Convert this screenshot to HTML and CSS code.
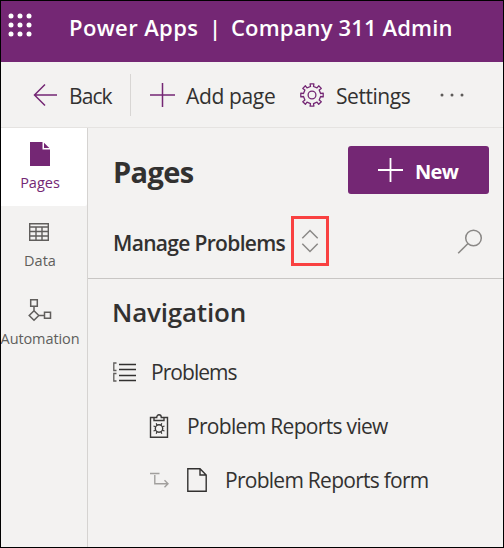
FILE: index.html
```html
<!DOCTYPE html>
<html lang="en">
<head>
<meta charset="utf-8">
<title>Power Apps | Company 311 Admin</title>
<link rel="stylesheet" href="styles.css">
</head>
<body>
<div class="app">
  <header class="topbar">
    <svg class="waffle" width="24" height="24" viewBox="0 0 24 24"><g fill="#fff"><circle cx="3" cy="3" r="2.5"/><circle cx="12" cy="3" r="2.5"/><circle cx="21" cy="3" r="2.5"/><circle cx="3" cy="12" r="2.5"/><circle cx="12" cy="12" r="2.5"/><circle cx="21" cy="12" r="2.5"/><circle cx="3" cy="21" r="2.5"/><circle cx="12" cy="21" r="2.5"/><circle cx="21" cy="21" r="2.5"/></g></svg>
    <span class="brand">Power Apps</span>
    <span class="bar">|</span>
    <span class="appname">Company 311 Admin</span>
  </header>
  <nav class="toolbar">
    <svg class="i-back" width="25" height="24" viewBox="0 0 25 24"><path d="M24 12H1.5M12 1.5 1.5 12 12 22.5" fill="none" stroke="#742774" stroke-width="1.5"/></svg>
    <span class="t-back">Back</span>
    <i class="sep"></i>
    <svg class="i-add" width="25" height="24" viewBox="0 0 25 24"><path d="M0 12H25M12.5 0V24" fill="none" stroke="#742774" stroke-width="1.5"/></svg>
    <span class="t-add">Add page</span>
    <svg class="i-gear" width="24" height="24" viewBox="0 0 24 24"><g fill="none" stroke="#742774" stroke-width="1.3" stroke-linejoin="round"><path d="M10.500 3.500 10.100.8H13.900L13.500 3.500 17 4.900 18.700 2.800 21.300 5.400 19.200 7 20.600 10.500 23.200 10.100V13.900L20.600 13.500 19.200 17 21.300 18.700 18.700 21.300 17 19.200 13.500 20.600 13.900 23.200H10.100L10.500 20.600 7 19.200 5.400 21.300 2.800 18.700 4.900 17 3.500 13.500.8 13.900V10.100L3.500 10.500 4.900 7 2.800 5.400 5.400 2.800 7 4.900Z"/><circle cx="12" cy="12" r="3.900"/></g></svg>
    <span class="t-set">Settings</span>
    <svg class="i-more" width="24" height="4" viewBox="0 0 24 4"><g fill="#5d5b59"><circle cx="2" cy="2" r="1.500"/><circle cx="12" cy="2" r="1.500"/><circle cx="22" cy="2" r="1.500"/></g></svg>
  </nav>
  <div class="body">
    <aside class="rail">
      <div class="tab active">
        <svg width="20" height="24" viewBox="0 0 20 24"><path d="M0 0H12.500V7.500H20V24H0Z" fill="#742774"/><path d="M14 .8V6H19.300Z" fill="#742774"/></svg>
        <span class="r-pages">Pages</span>
      </div>
      <div class="tab">
        <svg class="up" width="20" height="18" viewBox="0 0 20 18"><path d="M.7.700H19.300V17.300H.7ZM0 4H20M0 8.500H20M0 13H20M7 4V18M13 4V18" fill="none" stroke="#605e5c" stroke-width="1.4"/></svg>
        <span class="r-data">Data</span>
      </div>
      <div class="tab">
        <svg class="flow" width="24" height="24" viewBox="0 0 24 24"><path d="M2.700 1.700H9.300V8.300H2.700ZM6 8.300V12.500M6 12.700 10.800 17.500 6 22.300 1.200 17.500ZM10.800 17.500H16.500M16.500 14.300H22.500V20.300H16.500Z" fill="none" stroke="#605e5c" stroke-width="1.500"/></svg>
        <span class="r-auto">Automation</span>
      </div>
    </aside>
    <main class="pane">
      <div class="head">
        <h1>Pages</h1>
        <button class="new"><svg width="25" height="24" viewBox="0 0 25 24"><path d="M0 12H25M12.500 0V24" stroke="#fff" stroke-width="1.800"/></svg><span>New</span></button>
      </div>
      <div class="area">
        <span class="t-area">Manage Problems</span>
        <span class="switch"><svg width="18" height="24" viewBox="0 0 18 24"><path d="M1.300 9.200 9 1.500 16.700 9.200M1.300 14.800 9 22.500 16.700 14.800" fill="none" stroke="#8a8886" stroke-width="1.500"/></svg></span>
        <svg class="i-search" width="26" height="26" viewBox="0 0 26 26"><circle cx="16.500" cy="9" r="7.800" fill="none" stroke="#8a8886" stroke-width="1.500"/><path d="M11 14.500 1.200 24.300" stroke="#8a8886" stroke-width="1.600"/></svg>
      </div>
      <h2>Navigation</h2>
      <div class="row r1">
        <svg width="23" height="20" viewBox="0 0 23 20"><path d="M6 2.500H23M6 7.500H23M6 13.500H23M6 18.500H23" stroke="#323130" stroke-width="1.300"/><path d="M3.500 1H.8V8.500H3.500M3.500 11.500H.8V19H3.500" fill="none" stroke="#605e5c" stroke-width="1.300"/></svg>
        <span class="t1">Problems</span>
      </div>
      <div class="row r2">
        <svg width="20" height="24" viewBox="0 0 20 24"><g fill="none" stroke="#3b3a39" stroke-width="1.400"><path d="M5 3.500H1.500V23.200H18.500V3.500H15M5 6.500V3.500H7.700C7.700-.2 12.300-.2 12.300 3.500H15V6.500Z"/><circle cx="10" cy="14.500" r="3.700"/><path d="M8 11.200 7.200 9.300M12 11.200 12.800 9.300M8 17.800 7.200 19.700M12 17.800 12.800 19.700M6.700 12.800 4.500 12M13.300 12.800 15.500 12M6.700 16.200 4.500 17M13.300 16.200 15.500 17" stroke-width="1.200"/></g></svg>
        <span class="t2">Problem Reports view</span>
      </div>
      <div class="row r3">
        <svg width="19" height="16" viewBox="0 0 19 16"><path d="M0 1.500H9.500M4.800 3V11.800H18M14.500 8.300 18 11.800 14.500 15.300" fill="none" stroke="#a19f9d" stroke-width="1.400"/></svg>
        <svg class="file" width="20" height="24" viewBox="0 0 20 24"><path d="M.8.800H13L19.200 7V23.200H.8ZM13 .8V7H19.200" fill="none" stroke="#323130" stroke-width="1.400"/></svg>
        <span class="t3">Problem Reports form</span>
      </div>
    </main>
  </div>
</div>
</body>
</html>
```
FILE: styles.css
```css
* { box-sizing: border-box; }
body {
  margin: 0;
  font-family: "Open Sans", "Noto Sans", sans-serif;
  color: #323130;
}
svg { display: block; flex: none; }
span { white-space: nowrap; flex: none; }
.app {
  width: 504px;
  height: 548px;
  border: 1px solid #000;
  background: #f3f2f1;
  display: flex;
  flex-direction: column;
  overflow: hidden;
}
.topbar {
  height: 61px;
  background: #742774;
  color: #fff;
  display: flex;
  padding: 11px 0 0 7px;
  font-size: 22px;
  line-height: 30px;
  font-weight: 600;
}
.waffle { margin-top: 1px; }
.brand { width: 129px; margin-left: 37px; letter-spacing: 0.4px; }
.bar { width: 18px; text-align: center; margin-left: 8px; }
.appname { margin-left: 7px; letter-spacing: 0.15px; }
.toolbar {
  height: 65px;
  display: flex;
  align-items: center;
  font-size: 21px;
  line-height: 30px;
}
.toolbar span { padding-top: 2px; }
.i-back { margin-left: 32px; }
.t-back { width: 44px; margin-left: 11px; letter-spacing: -0.9px; }
.sep { width: 1px; height: 42px; background: #d8d6d4; margin-left: 17px; }
.i-add { margin-left: 19px; }
.t-add { width: 91px; margin-left: 11px; letter-spacing: -0.35px; }
.i-gear { margin-left: 23px; }
.t-set { width: 75px; margin-left: 12px; letter-spacing: -0.45px; }
.i-more { margin-left: 29px; }
.body { flex: 1; display: flex; border-top: 1px solid #e5e3e1; }
.rail {
  width: 87px;
  border-right: 1px solid #d5d3d1;
  font-size: 14.5px;
  line-height: 20px;
  color: #605e5c;
}
.tab {
  height: 78px;
  display: flex;
  flex-direction: column;
  align-items: center;
  justify-content: space-between;
  padding: 14px 8px 13px 0;
}
.active { background: #fff; color: #742774; border-radius: 0 0 2px 0; }
.up { margin: 3px 2px 0 0; }
.r-auto { letter-spacing: -0.1px; }
.pane { flex: 1; }
.head { height: 77px; display: flex; padding: 18px 14px 0 25px; justify-content: space-between; }
h1 { margin: 6px 0 0; font-size: 29px; line-height: 40px; font-weight: 700; letter-spacing: -0.6px; }
.new {
  width: 141px;
  height: 48px;
  border: 0;
  border-radius: 3px;
  background: #742774;
  color: #fff;
  font: 700 20px/28px "Open Sans", sans-serif;
  display: flex;
  align-items: center;
  padding: 0 0 0 30px;
  gap: 12px;
}
.new span { letter-spacing: -0.7px; padding-top: 3px; }
.area {
  height: 74px;
  border-bottom: 1px solid #c8c6c4;
  display: flex;
  padding: 11px 20px 0 25px;
}
.t-area { width: 178px; padding-top: 13px; font-size: 21px; line-height: 28px; font-weight: 600; letter-spacing: -0.68px; }
.switch {
  width: 38px;
  height: 50px;
  border: 3px solid #f94141;
  display: flex;
  align-items: center;
  justify-content: center;
}
.i-search { margin: 13px 0 0 auto; }
h2 { margin: 15px 0 0 24px; font-size: 26px; line-height: 36px; font-weight: 600; letter-spacing: -0.2px; }
.row { display: flex; align-items: center; height: 54px; font-size: 21px; }
.r1 { margin-top: 15px; padding-left: 25px; }
.r2 { padding-left: 61px; }
.r3 { padding-left: 62px; }
.t1 { margin-left: 15px; letter-spacing: -0.95px; }
.t2 { margin-left: 18px; letter-spacing: -0.68px; }
.t3 { margin-left: 18px; letter-spacing: -0.73px; }
.file { margin-left: 18px; }
```
